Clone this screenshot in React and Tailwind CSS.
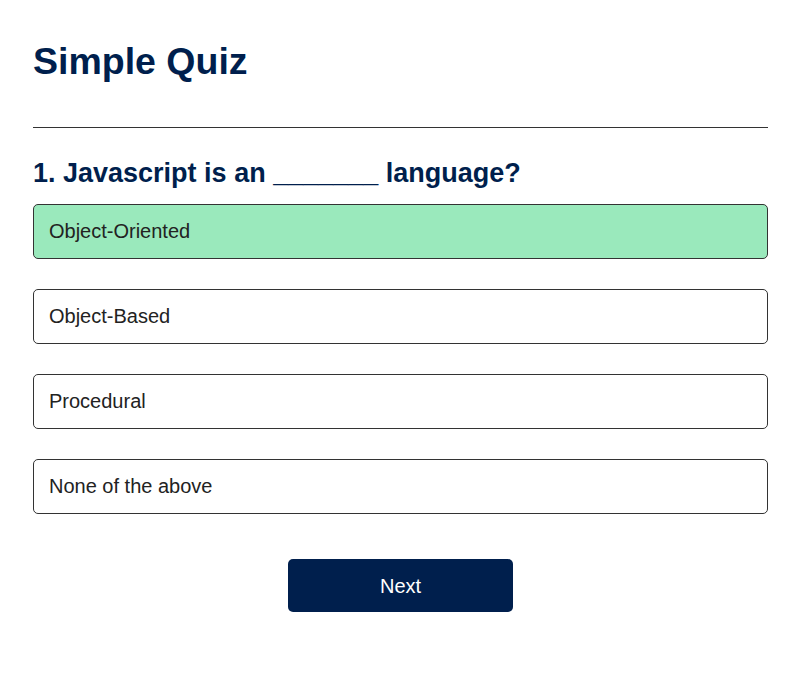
const options = ["Object-Oriented", "Object-Based", "Procedural", "None of the above"];

const App = () => {
    const selected = 0;
    return (
        <div className="min-h-screen bg-white font-['Liberation_Sans',Arial,sans-serif]">
            <div className="w-[735px] ml-[33px] pt-[40px]">
                <h1 className="text-[37.5px] leading-[43px] font-bold text-[#001f4d]">Simple Quiz</h1>
                <hr className="mt-[44px] border-0 border-t border-[#333]" />

                <h2 className="mt-[30px] text-[27px] leading-[31px] font-bold text-[#001f4d]">
                    1. Javascript is an _______ language?
                </h2>

                <div className="mt-[15px] flex flex-col gap-[30px]">
                    {options.map((opt, i) => (
                        <div
                            key={opt}
                            className={
                                i === selected
                                    ? "h-[55px] flex items-center px-[15px] border border-[#333] rounded-[5px] bg-[#9ae9bc] text-[20px] leading-[23px] text-[#222]"
                                    : "h-[55px] flex items-center px-[15px] border border-[#333] rounded-[5px] bg-white text-[20px] leading-[23px] text-[#222]"
                            }
                        >
                            {opt}
                        </div>
                    ))}
                </div>

                <div className="mt-[45px] flex justify-center">
                    <button className="w-[225px] h-[53px] rounded-[5px] bg-[#001f4d] text-white text-[20px]">
                        Next
                    </button>
                </div>
            </div>
        </div>
    );
};

export default App;
